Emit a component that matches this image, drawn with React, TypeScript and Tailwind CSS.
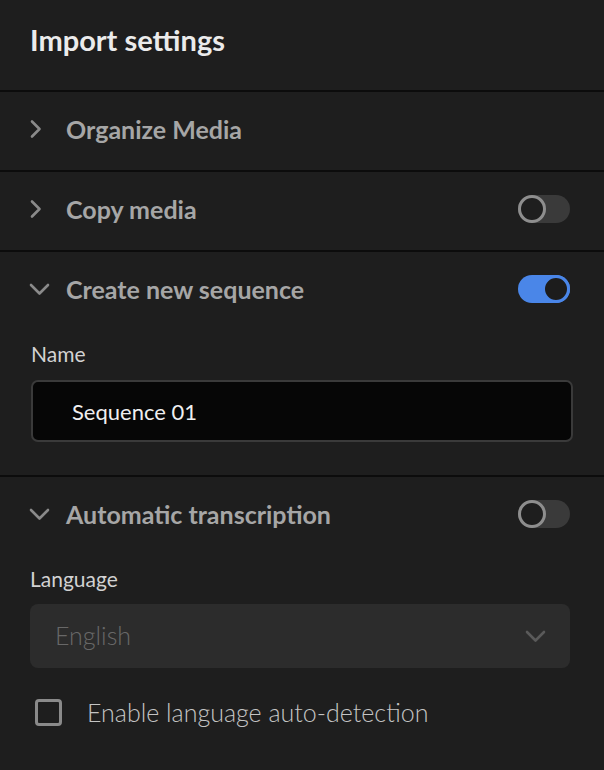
import React, { useState } from "react";

const font = { fontFamily: "Lato, 'Open Sans', sans-serif" };

function ChevronRight() {
  return (
    <svg width="14" height="20" viewBox="0 0 14 20" className="shrink-0">
      <path d="M3 2.5l7.5 7.5-7.5 7.5" fill="none" stroke="#8a8a8a" strokeWidth="2.6" strokeLinecap="round" strokeLinejoin="round" />
    </svg>
  );
}

function ChevronDown({ color = "#8a8a8a" }: { color?: string }) {
  return (
    <svg width="21" height="14" viewBox="0 0 21 14" className="shrink-0">
      <path d="M2 3l8.5 8.5 8.5-8.5" fill="none" stroke={color} strokeWidth="2.6" strokeLinecap="round" strokeLinejoin="round" />
    </svg>
  );
}

function Toggle({ on }: { on: boolean }) {
  return on ? (
    <div className="flex h-[28px] w-[52px] items-center justify-end rounded-full bg-[#4a86e8]">
      <div className="h-[28px] w-[28px] rounded-full border-[3px] border-[#4a86e8] bg-[#1c1c1c]" />
    </div>
  ) : (
    <div className="flex h-[28px] w-[52px] items-center rounded-full bg-[#3a3a3a]">
      <div className="h-[28px] w-[28px] rounded-full border-[3px] border-[#8e8e8e] bg-[#1e1e1e]" />
    </div>
  );
}

function Divider() {
  return <div className="h-[2px] w-full bg-[#0c0c0c]" />;
}

function SectionHeader({
  title,
  open,
  toggle,
}: {
  title: string;
  open: boolean;
  toggle?: boolean;
}) {
  return (
    <div className="flex h-[78px] items-center pb-[5px] pl-[29px] pr-[34px]">
      <div className="flex w-[37px] items-center">
        {open ? <ChevronDown /> : <ChevronRight />}
      </div>
      <span className="flex-1 text-[25px] leading-[32px] font-bold text-[#a6a6a6]">{title}</span>
      {toggle !== undefined && <Toggle on={toggle} />}
    </div>
  );
}

export default function App() {
  const [name, setName] = useState("Sequence 01");

  return (
    <div className="h-[770px] w-[604px] overflow-hidden bg-[#1e1e1e]" style={font}>
      <div className="h-[90px] pl-[30px] pt-[20px]">
        <h1 className="text-[29px] leading-[40px] font-bold text-[#ebebeb]">Import settings</h1>
      </div>
      <Divider />
      <SectionHeader title="Organize Media" open={false} />
      <Divider />
      <SectionHeader title="Copy media" open={false} toggle={false} />
      <Divider />

      {/* Create new sequence */}
      <SectionHeader title="Create new sequence" open toggle />
      <div className="px-[31px] pt-[10px] pb-[33px]">
        <div className="text-[21px] leading-[28px] text-[#d2d2d2]">Name</div>
        <input
          value={name}
          onChange={(e) => setName(e.target.value)}
          className="mt-[12px] h-[62px] w-[542px] rounded-[7px] border-2 border-[#3a3a3a] bg-[#060606] pl-[39px] text-[22px] text-[#efefef] outline-none"
          style={font}
        />
      </div>
      <Divider />

      {/* Automatic transcription */}
      <SectionHeader title="Automatic transcription" open toggle={false} />
      <div className="px-[30px] pt-[10px]">
        <div className="text-[21px] leading-[28px] text-[#d2d2d2]">Language</div>
        <div className="mt-[11px] flex h-[64px] w-[540px] items-center justify-between rounded-[8px] bg-[#2c2c2c] pl-[25px] pr-[24px]">
          <span className="text-[25px] font-light text-[#686868]">English</span>
          <ChevronDown color="#5a5a5a" />
        </div>
        <div className="mt-[26px] flex h-[36px] items-center pl-[5px]">
          <div className="h-[27px] w-[27px] rounded-[4px] border-[3px] border-[#8a8a8a]" />
          <span className="ml-[25px] text-[25px] leading-[36px] font-light text-[#c4c4c4]">
            Enable language auto-detection
          </span>
        </div>
      </div>
    </div>
  );
}
